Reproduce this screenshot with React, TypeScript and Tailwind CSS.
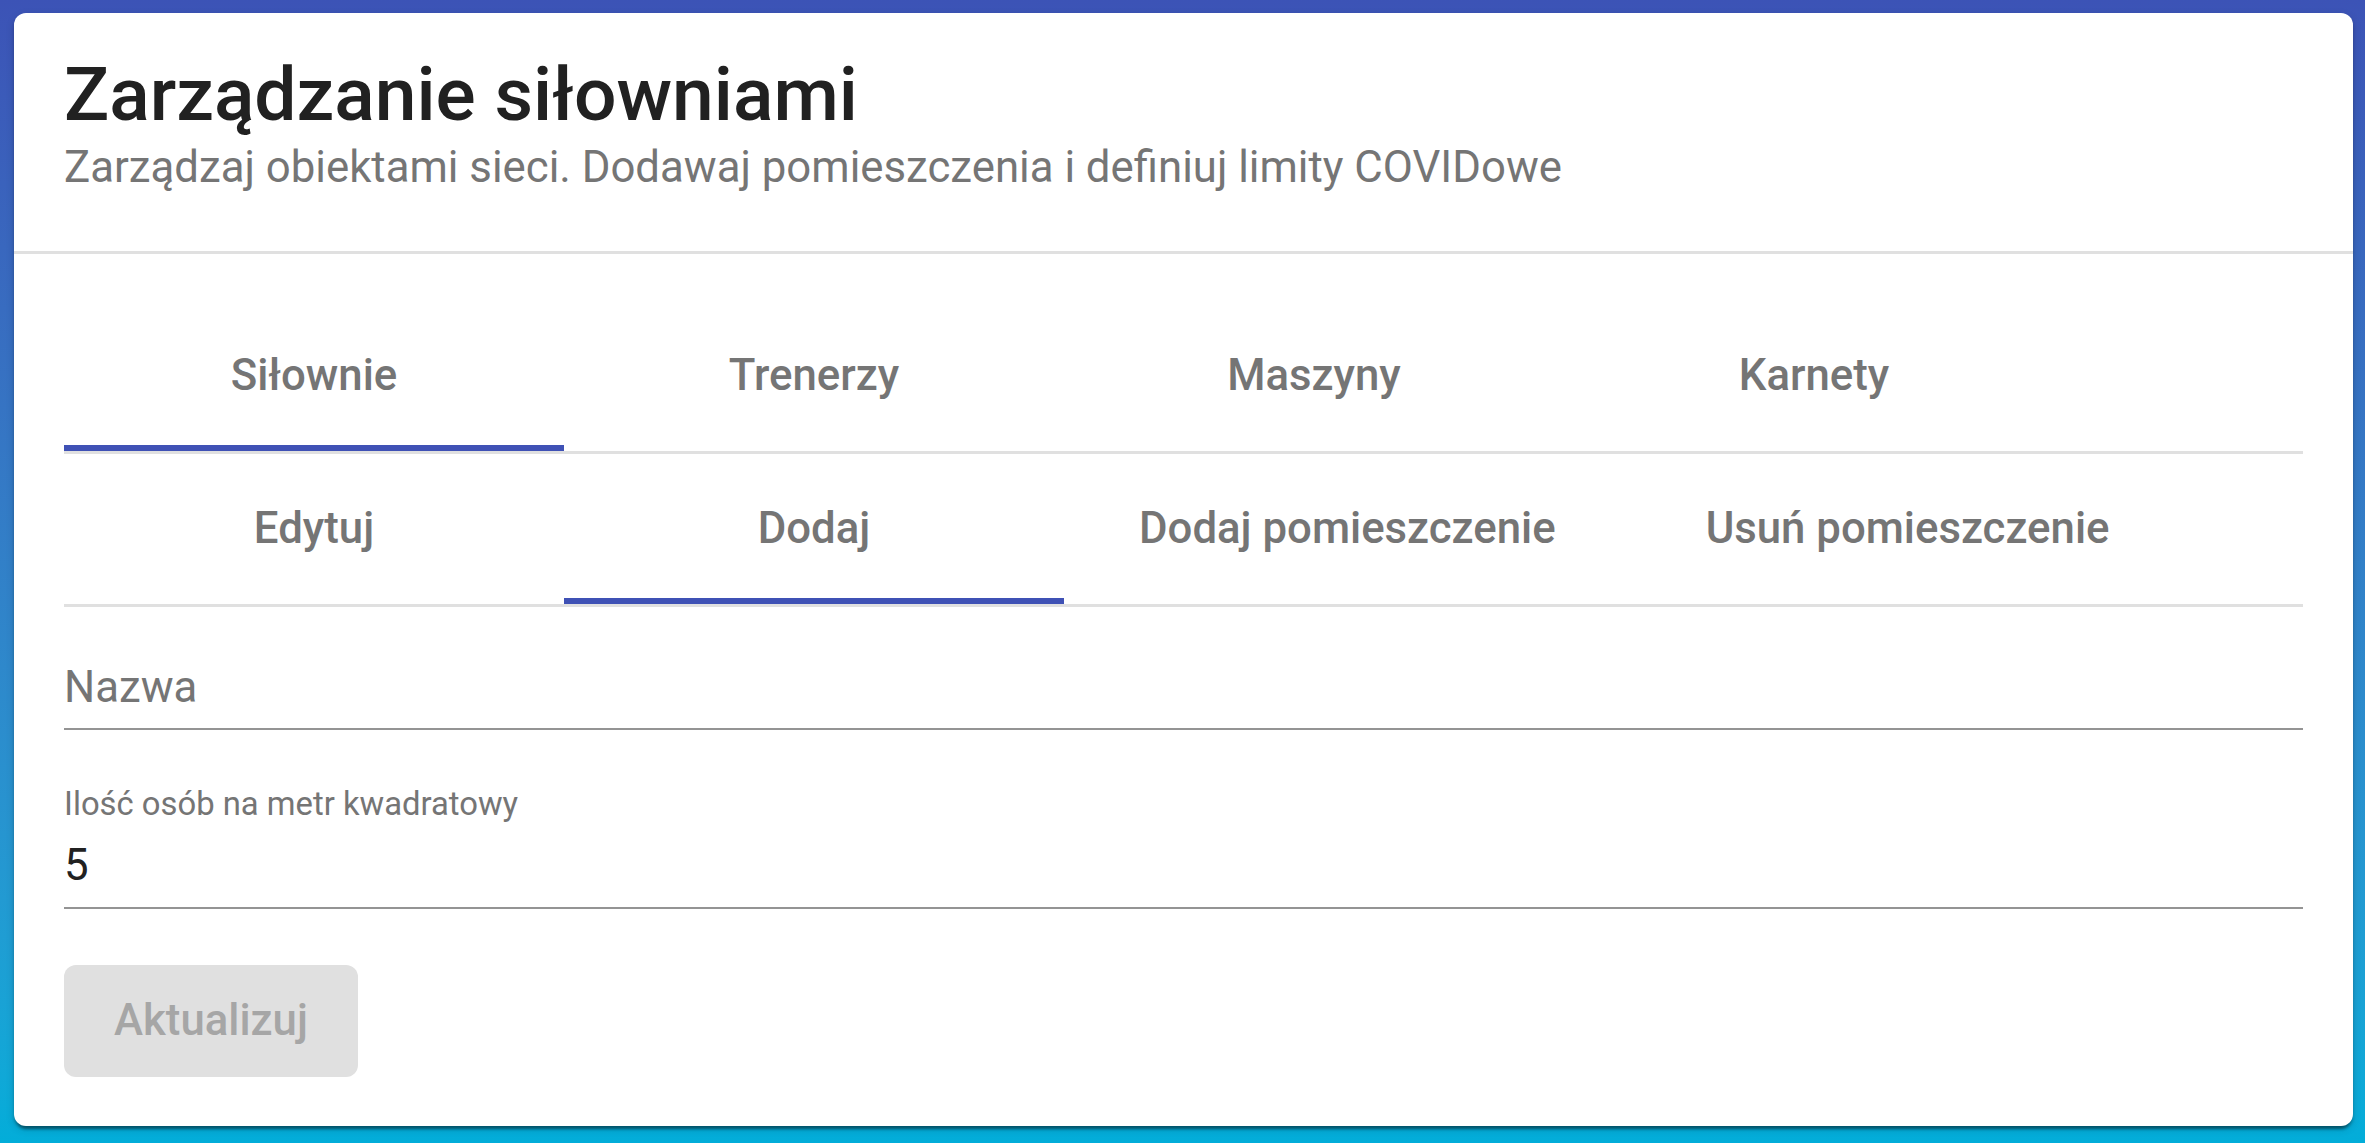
import React from "react";

const topTabs = ["Siłownie", "Trenerzy", "Maszyny", "Karnety"];
const subTabs = ["Edytuj", "Dodaj", "Dodaj pomieszczenie", "Usuń pomieszczenie"];

function TabRow({
  labels,
  active,
  height,
}: {
  labels: string[];
  active: number;
  height: string;
}) {
  return (
    <div className="flex border-b-[3px] border-[#e0e0e0]">
      {labels.map((label, idx) => (
        <div
          key={label}
          className={
            idx === active
              ? `${height} flex min-w-[500px] items-center justify-center border-b-[6px] border-[#3f51b5] px-[75px] pt-[6px] text-[43.75px] font-medium text-[#757575]`
              : `${height} flex min-w-[500px] items-center justify-center border-b-[6px] border-transparent px-[75px] pt-[6px] text-[43.75px] font-medium text-[#757575]`
          }
        >
          {label}
        </div>
      ))}
    </div>
  );
}

export default function App() {
  return (
    <div className="h-screen w-full bg-gradient-to-b from-[#3c53b6] to-[#02add9] pt-[13px] pr-[12px] pb-[17px] pl-[14px] font-['Roboto',sans-serif]">
      <div className="h-full rounded-[12px] bg-white shadow-[0_6px_3px_-3px_rgba(0,0,0,0.3),0_3px_3px_0_rgba(0,0,0,0.2),0_3px_9px_0_rgba(0,0,0,0.15)]">
        {/* header */}
        <div className="border-b-[3px] border-[#e0e0e0] px-[50px] pt-[37px] pb-[58px]">
          <h1 className="text-[75px] leading-[88px] font-medium text-[#212121]">
            Zarządzanie siłowniami
          </h1>
          <p className="mt-[4px] text-[43.75px] leading-[51px] text-[#757575]">
            Zarządzaj obiektami sieci. Dodawaj pomieszczenia i definiuj limity COVIDowe
          </p>
        </div>

        <div className="px-[50px] pt-[46px]">
          <TabRow labels={topTabs} active={0} height="h-[151px]" />
          <TabRow labels={subTabs} active={1} height="h-[150px]" />

          {/* Nazwa */}
          <div className="mt-[55px] border-b-2 border-[#949494] pb-[15px]">
            <div className="text-[43.75px] leading-[51px] text-[#757575]">Nazwa</div>
          </div>

          {/* limit */}
          <div className="mt-[55px] border-b-2 border-[#949494] pb-[16px]">
            <div className="text-[32.8px] leading-[38px] text-[#757575]">
              Ilość osób na metr kwadratowy
            </div>
            <div className="mt-[17px] text-[43.75px] leading-[51px] text-[#212121]">5</div>
          </div>

          <button
            disabled
            className="mt-[56px] flex h-[112px] items-center rounded-[12px] bg-[#e0e0e0] px-[50px] text-[43.75px] font-medium text-[#a6a6a6]"
          >
            Aktualizuj
          </button>
        </div>
      </div>
    </div>
  );
}
